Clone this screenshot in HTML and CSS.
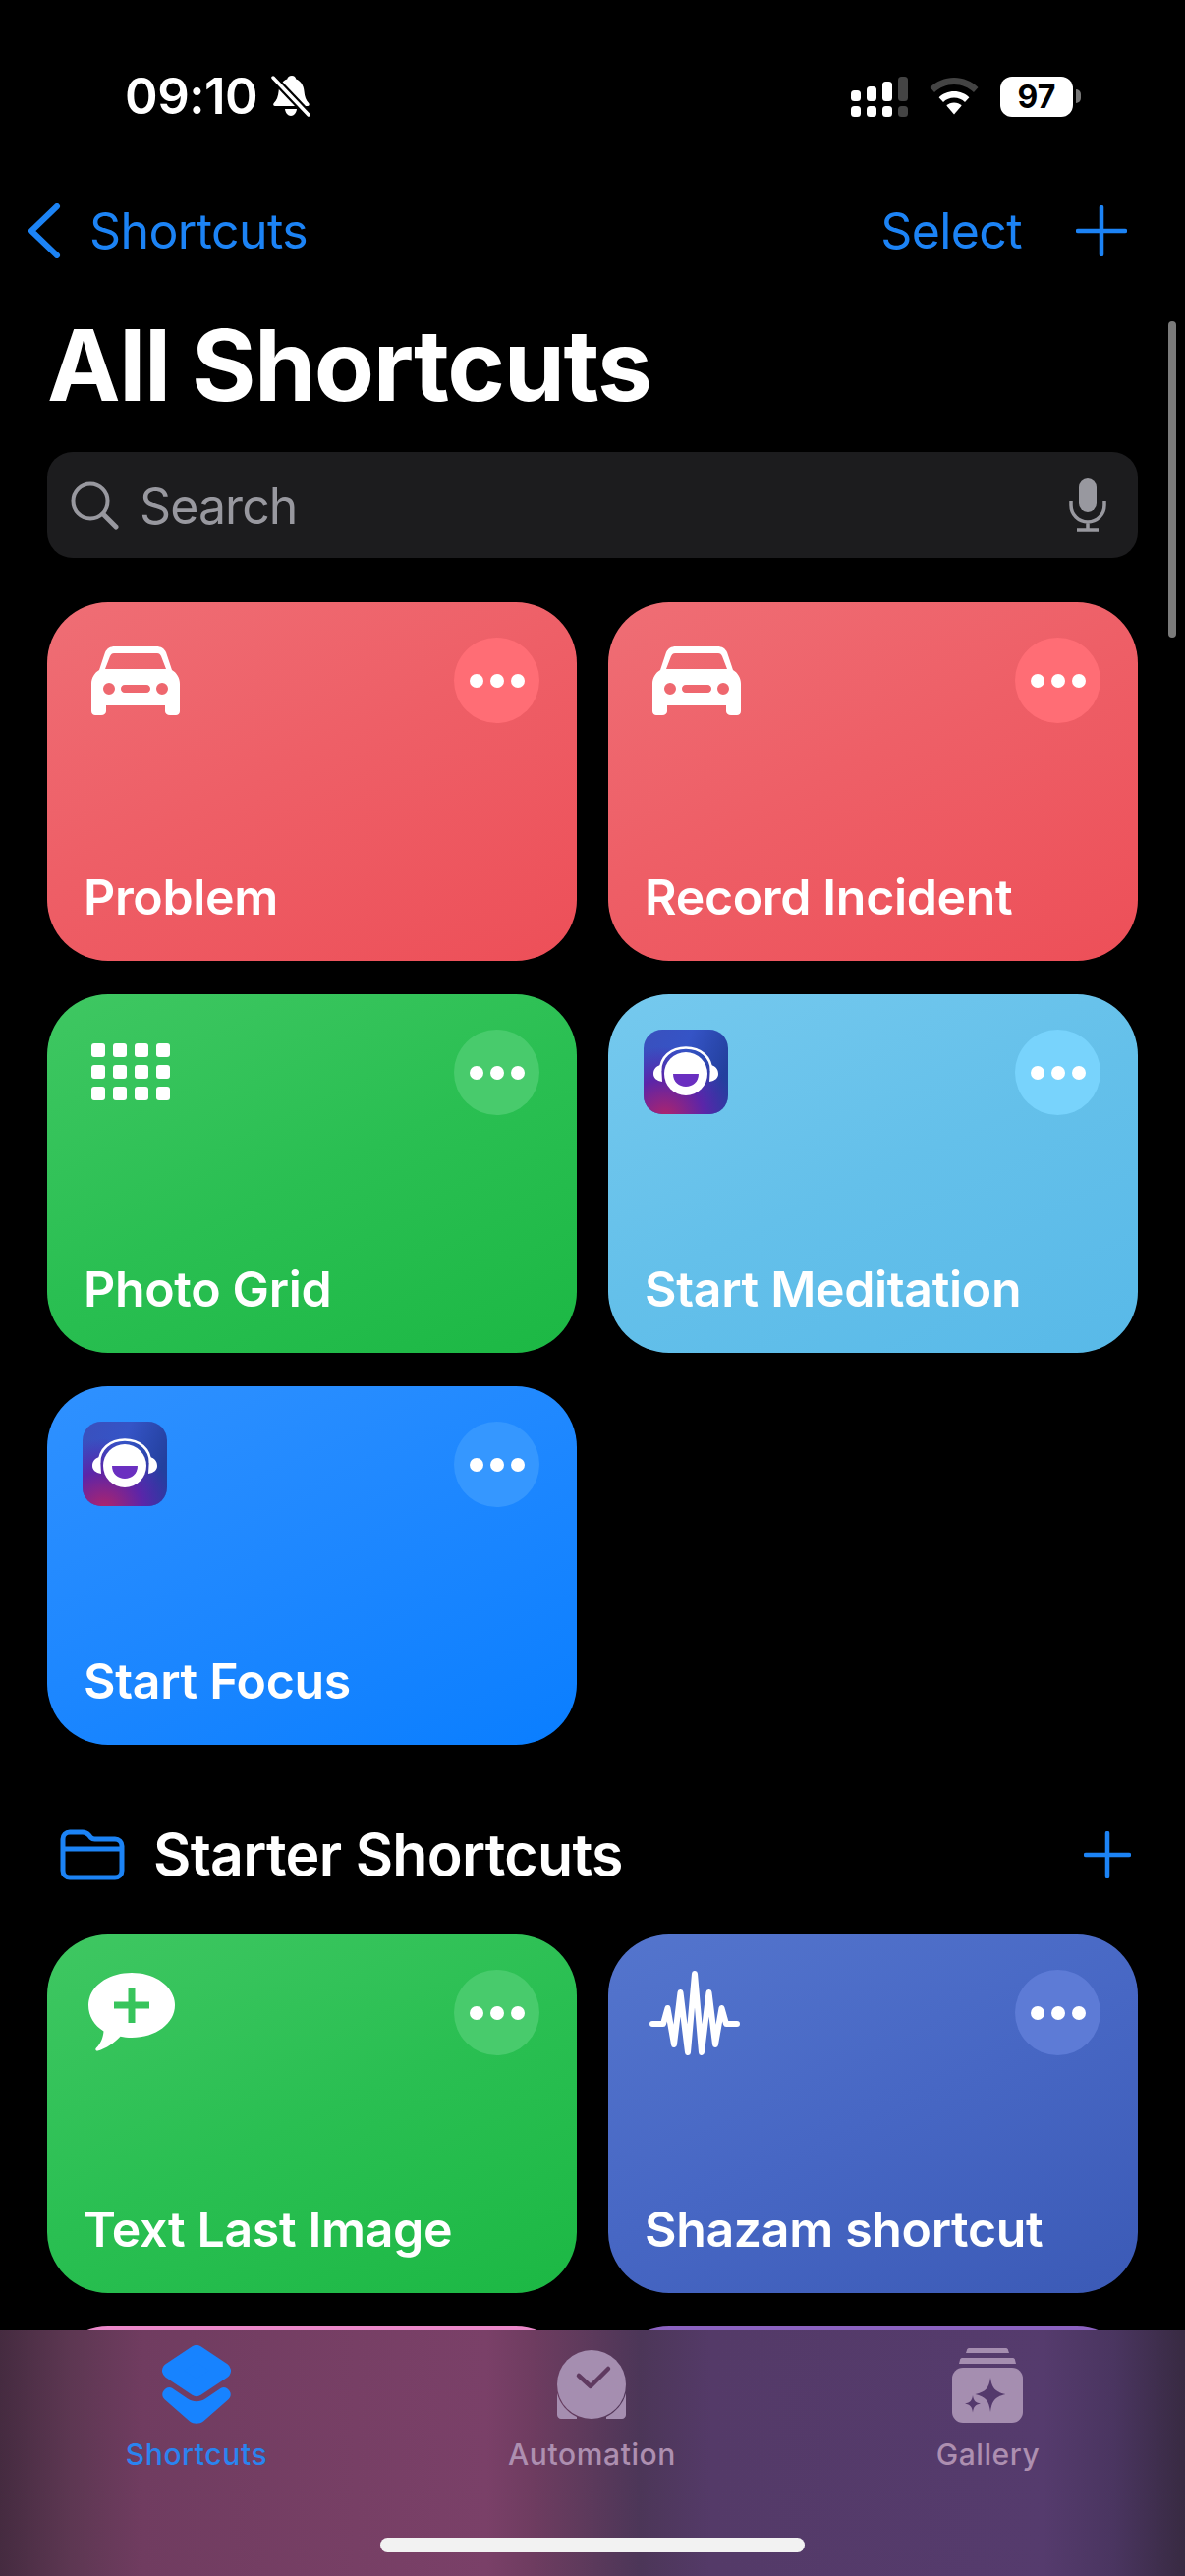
FILE: index.html
```html
<!DOCTYPE html>
<html lang="en">
<head>
<meta charset="utf-8">
<title>All Shortcuts</title>
<link rel="stylesheet" href="styles.css">
</head>
<body>
<div class="screen">
  <header class="status">
    <div class="status-left">
      <span class="time">09:10</span>
      <svg class="bell" viewBox="0 0 40 42"><path fill="#fff" d="M21 0c2.500 0 4 1.600 4.300 3.600 5 1.800 7.700 6.700 8.200 12.400.4 5 2 9.500 4.700 12 1 1.200.5 3-1.200 3H4c-1.800 0-2.400-1.800-1.300-3 2.800-2.600 4.500-7 4.900-12 .5-5.700 3.300-10.600 8.600-12.400C16.500 1.600 18.500 0 21 0z"/><path fill="#fff" d="M14 34h12c-.4 4-3 7-6 7s-5.600-3-6-7z"/><path stroke="#000" stroke-width="8" d="M0 0L40 42"/><path stroke="#fff" stroke-width="3.500" stroke-linecap="round" d="M2 2L38 40"/></svg>
    </div>
    <div class="status-right">
      <svg class="signal" viewBox="0 0 58 41"><g fill="#fff"><rect x="0" y="14" width="10" height="11" rx="3.500"/><rect x="16" y="10" width="10" height="15" rx="3.500"/><rect x="32" y="5" width="10" height="20" rx="3.500"/><rect x="0" y="30" width="10" height="11" rx="3.500"/><rect x="16" y="30" width="10" height="11" rx="3.500"/><rect x="32" y="30" width="10" height="11" rx="3.500"/></g><g fill="#444"><rect x="48" y="0" width="10" height="25" rx="3.500"/><rect x="48" y="30" width="10" height="11" rx="3.500"/></g></svg>
      <svg class="wifi" viewBox="0 0 50 38"><path fill="#444" d="M25 0c9.500 0 18 3.800 24.500 10L45 15C39.800 10 32.800 7 25 7S10.200 10 5 15L.5 10C7 3.800 15.500 0 25 0z"/><path fill="#fff" d="M25 14c6 0 11.400 2.300 15.400 6.200L36 25c-2.800-2.800-6.700-4.500-11-4.500S16.800 22.200 14 25l-4.400-4.800C13.600 16.300 19 14 25 14z"/><path fill="#fff" d="M25 25.500c3 0 5.700 1.200 7.700 3.100L25 37.500l-7.700-8.900c2-1.900 4.700-3.100 7.700-3.100z"/></svg>
      <div class="battery"><span class="battery-body">97</span><span class="battery-tip"></span></div>
    </div>
  </header>

  <nav class="navbar">
    <div class="nav-back">
      <svg class="chevron" viewBox="0 0 34 56"><path fill="none" stroke="#1c83f5" stroke-width="6" stroke-linecap="round" stroke-linejoin="round" d="M30 3L4 28L30 53"/></svg>
      <span>Shortcuts</span>
    </div>
    <div class="nav-actions">
      <span>Select</span>
      <svg class="plus-lg" viewBox="0 0 52 52"><path stroke="#1c83f5" stroke-width="4.500" stroke-linecap="round" d="M26 2V50M2 26H50"/></svg>
    </div>
  </nav>

  <main class="content">
    <h1 class="title">All Shortcuts</h1>
    <div class="search">
      <svg class="search-icon" viewBox="0 0 50 50"><circle cx="21" cy="21" r="17.500" fill="none" stroke="#98989f" stroke-width="4"/><path stroke="#98989f" stroke-width="5" stroke-linecap="round" d="M34 34L47 47"/></svg>
      <span class="search-text">Search</span>
      <svg class="mic-icon" viewBox="0 0 38 54"><rect x="10" y="0" width="18" height="34" rx="9" fill="#98989f"/><path fill="none" stroke="#98989f" stroke-width="3.500" d="M2 23v4c0 9.500 7.500 17 17 17s17-7.500 17-17v-4M19 44v8M8 52h22"/></svg>
    </div>

    <section class="grid">
      <article class="card red">
        <div class="card-top">
          <svg class="icon-car" viewBox="0 0 90 70"><path fill="#fff" fill-rule="evenodd" d="M24 0H66C71 0 74 2 76 6L82 24C87 27 90 32 90 38V66C90 68.500 88 70 86 70H80C77 70 75 68 75 66V60H15V66C15 68 13 70 10 70H4C2 70 0 68.500 0 66V38C0 32 3 27 8 24L14 6C16 2 19 0 24 0ZM23 7C21 7 20 8 19 10L14 23H76L71 10C70 8 69 7 67 7ZM18 37A6 6 0 1 0 18 49A6 6 0 1 0 18 37ZM72 37A6 6 0 1 0 72 49A6 6 0 1 0 72 37ZM34 39C31.500 39 30 41 30 43S31.500 47 34 47H56C58.500 47 60 45 60 43S58.500 39 56 39Z"/></svg>
          <button class="more"><i></i><i></i><i></i></button>
        </div>
        <h2 class="card-label">Problem</h2>
      </article>
      <article class="card red">
        <div class="card-top">
          <svg class="icon-car" viewBox="0 0 90 70"><path fill="#fff" fill-rule="evenodd" d="M24 0H66C71 0 74 2 76 6L82 24C87 27 90 32 90 38V66C90 68.500 88 70 86 70H80C77 70 75 68 75 66V60H15V66C15 68 13 70 10 70H4C2 70 0 68.500 0 66V38C0 32 3 27 8 24L14 6C16 2 19 0 24 0ZM23 7C21 7 20 8 19 10L14 23H76L71 10C70 8 69 7 67 7ZM18 37A6 6 0 1 0 18 49A6 6 0 1 0 18 37ZM72 37A6 6 0 1 0 72 49A6 6 0 1 0 72 37ZM34 39C31.500 39 30 41 30 43S31.500 47 34 47H56C58.500 47 60 45 60 43S58.500 39 56 39Z"/></svg>
          <button class="more"><i></i><i></i><i></i></button>
        </div>
        <h2 class="card-label">Record Incident</h2>
      </article>
      <article class="card green">
        <div class="card-top">
          <svg class="icon-grid" viewBox="0 0 80 58"><g fill="#fff"><rect x="0" y="0" width="14" height="14" rx="3"/><rect x="22" y="0" width="14" height="14" rx="3"/><rect x="44" y="0" width="14" height="14" rx="3"/><rect x="66" y="0" width="14" height="14" rx="3"/><rect x="0" y="22" width="14" height="14" rx="3"/><rect x="22" y="22" width="14" height="14" rx="3"/><rect x="44" y="22" width="14" height="14" rx="3"/><rect x="66" y="22" width="14" height="14" rx="3"/><rect x="0" y="44" width="14" height="14" rx="3"/><rect x="22" y="44" width="14" height="14" rx="3"/><rect x="44" y="44" width="14" height="14" rx="3"/><rect x="66" y="44" width="14" height="14" rx="3"/></g></svg>
          <button class="more"><i></i><i></i><i></i></button>
        </div>
        <h2 class="card-label">Photo Grid</h2>
      </article>
      <article class="card sky">
        <div class="card-top">
          <svg class="icon-app" viewBox="0 0 86 86"><use href="#app-logo"/></svg>
          <button class="more"><i></i><i></i><i></i></button>
        </div>
        <h2 class="card-label">Start Meditation</h2>
      </article>
      <article class="card blue">
        <div class="card-top">
          <svg class="icon-app" viewBox="0 0 86 86"><use href="#app-logo"/></svg>
          <button class="more"><i></i><i></i><i></i></button>
        </div>
        <h2 class="card-label">Start Focus</h2>
      </article>
    </section>

    <div class="section-head">
      <svg class="folder" viewBox="0 0 66 52"><path fill="none" stroke="#1c83f5" stroke-width="5" stroke-linejoin="round" d="M3 10c0-4 3-7 7-7h13c3 0 4.500 1 6.500 3l2 2.500c1 1 2 1.500 4 1.500H56c4 0 7 3 7 7v25c0 4-3 7-7 7H10c-4 0-7-3-7-7zM3 20h60"/></svg>
      <h2 class="section-title">Starter Shortcuts</h2>
      <svg class="plus-sm" viewBox="0 0 48 48"><path stroke="#1c83f5" stroke-width="4.500" stroke-linecap="round" d="M24 2V46M2 24H46"/></svg>
    </div>

    <section class="grid">
      <article class="card green">
        <div class="card-top">
          <svg class="icon-chat" viewBox="0 0 88 80"><path fill="#fff" fill-rule="evenodd" d="M44 0C68.500 0 88 14.500 88 33S68.500 66 44 66C40 66 36 65.600 32.500 64.800 27 70.500 18 77.500 9.500 79.500 7.500 80 6.500 78 8 76.500 12 72.500 15 66.500 15.500 59.500 6 53.500 0 44 0 33 0 14.500 19.500 0 44 0ZM40.500 15V29.500H26V36.500H40.500V51H47.500V36.500H62V29.500H47.500V15Z"/></svg>
          <button class="more"><i></i><i></i><i></i></button>
        </div>
        <h2 class="card-label">Text Last Image</h2>
      </article>
      <article class="card indigo">
        <div class="card-top">
          <svg class="icon-wave" viewBox="0 0 92 86"><path fill="none" stroke="#fff" stroke-width="6" stroke-linecap="round" stroke-linejoin="round" d="M3 54H14L18.500 38L25 75L31.500 22L39 83L46 3L53 83L60.500 22L67 75L73.500 38L78 54H89"/></svg>
          <button class="more"><i></i><i></i><i></i></button>
        </div>
        <h2 class="card-label">Shazam shortcut</h2>
      </article>
      <article class="card pink"></article>
      <article class="card purple"></article>
    </section>
  </main>

  <div class="scrollbar"></div>

  <footer class="tabbar">
    <div class="tab tab-active">
      <svg class="tab-icon" viewBox="0 0 70 80"><path fill="#1783ff" stroke="#1783ff" stroke-width="16" stroke-linejoin="round" d="M35 8L62 26L35 44L8 26Z"/><path fill="#1783ff" d="M4 44c2-1.500 4.500-1.500 6.500 0L26 54.500c5.500 3.500 12.500 3.500 18 0L59.500 44c2-1.500 4.500-1.500 6.500 0 5 3.500 5 9 0 12.500L42 77.500c-4 3-10 3-14 0L4 56.500C-1 53 -1 47.500 4 44z"/></svg>
      <span class="tab-label">Shortcuts</span>
    </div>
    <div class="tab">
      <svg class="tab-icon" viewBox="0 0 70 70"><path class="tab-fill" d="M0 44C3 55 10 63 20 68L20 70H4C2 70 0 68 0 66zM70 44C67 55 60 63 50 68L50 70H66C68 70 70 68 70 66z"/><circle class="tab-fill" cx="35" cy="35" r="35"/><path fill="none" stroke="#5f3a60" stroke-width="4.500" stroke-linecap="round" stroke-linejoin="round" d="M22 27L34 38L52 20" transform="translate(0 -1)"/></svg>
      <span class="tab-label">Automation</span>
    </div>
    <div class="tab">
      <svg class="tab-icon gallery" viewBox="0 0 72 76"><path class="tab-fill" d="M15 2c0-1 1-2 2-2h38c1 0 2 1 2 2l1 3H14zM8 12c0-1 1-2 2-2h52c1 0 2 1 2 2l1 4H7z"/><rect class="tab-fill" x="0" y="20" width="72" height="56" rx="11"/><path fill="#54396c" d="M39 30c1.500 11 5 14.500 15.500 17C44 49.500 40.500 53 39 65c-1.500-12-5-15.500-15.500-18C34 44.500 37.500 41 39 30z"/><path fill="#54396c" d="M21 48c.8 5.500 2.500 7.500 8 8.500-5.500 1-7.200 3-8 9-.8-6-2.500-8-8-9 5.500-1 7.200-3 8-8.500z"/></svg>
      <span class="tab-label">Gallery</span>
    </div>
    <div class="home-indicator"></div>
  </footer>

  <svg class="defs" width="0" height="0">
    <defs>
      <linearGradient id="logo-b" x1="0" y1="0" x2="1" y2="0.4"><stop offset="0" stop-color="#3a50bd"/><stop offset="0.5" stop-color="#3554c6"/><stop offset="1" stop-color="#23409e"/></linearGradient>
      <radialGradient id="logo-a" cx="0.25" cy="1.05" r="0.85"><stop offset="0" stop-color="#b2246a"/><stop offset="0.55" stop-color="#5c25a8"/><stop offset="1" stop-color="#5225b0" stop-opacity="0"/></radialGradient>
      <symbol id="app-logo" viewBox="0 0 86 86">
        <rect width="86" height="86" rx="19" fill="url(#logo-b)"/>
        <rect width="86" height="86" rx="19" fill="url(#logo-a)"/>
        <path fill="none" stroke="#fff" stroke-width="2.500" d="M17 42C17 28 28 18.500 43 18.500S69 28 69 42"/>
        <path fill="#fff" d="M18 36C12 37 10 41 10 45S13 52 19 53zM68 36C74 37 76 41 76 45S73 52 67 53z"/>
        <circle cx="43" cy="45" r="22" fill="#fff"/>
        <path fill="#6a2fc0" d="M30 45H56C56 53 50 58 43 58S30 53 30 45z"/>
      </symbol>
    </defs>
  </svg>
</div>
</body>
</html>
```

FILE: styles.css
```css
* { box-sizing: border-box; }

html, body {
  margin: 0;
  padding: 0;
  background: #000;
}

.screen {
  position: relative;
  width: 1206px;
  height: 2622px;
  overflow: hidden;
  background: #000;
  color: #fff;
  font-family: Inter, "Noto Sans", "Liberation Sans", sans-serif;
}

/* status bar */
.status {
  display: flex;
  justify-content: space-between;
  align-items: center;
  height: 196px;
  padding: 0 106px 0 127px;
}

.status-left {
  display: flex;
  align-items: center;
  gap: 14px;
}

.time {
  font-size: 51px;
  font-weight: 600;
  line-height: 60px;
  letter-spacing: -0.5px;
}

.bell { width: 40px; height: 42px; }

.status-right {
  display: flex;
  align-items: center;
  gap: 22px;
}

.signal { width: 58px; height: 41px; }
.wifi { width: 50px; height: 38px; }

.battery {
  display: flex;
  align-items: center;
  gap: 3px;
}

.battery-body {
  display: flex;
  align-items: center;
  justify-content: center;
  width: 74px;
  height: 41px;
  border-radius: 12px;
  background: #fff;
  color: #000;
  font-size: 32px;
  font-weight: 700;
}

.battery-tip {
  width: 5px;
  height: 14px;
  border-radius: 0 5px 5px 0;
  background: #777;
}

/* navigation */
.navbar {
  display: flex;
  justify-content: space-between;
  align-items: center;
  height: 78px;
  padding: 0 59px 0 28px;
  color: #1c83f5;
  font-size: 50px;
  letter-spacing: -0.6px;
}

.nav-back {
  display: flex;
  align-items: center;
  gap: 29px;
}

.chevron { width: 34px; height: 56px; }

.nav-actions {
  display: flex;
  align-items: center;
  gap: 55px;
}

.plus-lg { width: 52px; height: 52px; }

/* content */
.content {
  padding: 0 48px;
}

.title {
  margin: 38px 0 0;
  font-size: 100px;
  font-weight: 700;
  line-height: 120px;
  letter-spacing: -1.4px;
}

.search {
  display: flex;
  align-items: center;
  height: 108px;
  margin-top: 28px;
  padding: 0 32px 0 23px;
  border-radius: 26px;
  background: #1c1c1e;
}

.search-icon { width: 50px; height: 50px; }

.search-text {
  flex: 1;
  margin-left: 21px;
  padding-top: 2px;
  color: #98989f;
  font-size: 50px;
  letter-spacing: -0.9px;
}

.mic-icon { width: 38px; height: 54px; }

.grid {
  display: grid;
  grid-template-columns: 539px 539px;
  grid-auto-rows: 365px;
  column-gap: 32px;
  row-gap: 34px;
  margin-top: 45px;
}

.card {
  position: relative;
  display: flex;
  flex-direction: column;
  justify-content: space-between;
  padding: 36px 38px 35px 37px;
  border-radius: 62px;
}

.red { background: linear-gradient(155deg, #ef6e75 0%, #ee5f67 45%, #ed4f58 100%); }
.red .more { background: #ff6d75; }
.green { background: linear-gradient(155deg, #3fc762 0%, #2abf52 50%, #1cb844 100%); }
.green .more { background: #48cb6c; }
.sky { background: linear-gradient(155deg, #75c9ee 0%, #64c0ea 50%, #58b9e8 100%); }
.sky .more { background: #78d3fc; }
.blue { background: linear-gradient(155deg, #2f91ff 0%, #1d87ff 50%, #0a7eff 100%); }
.blue .more { background: #3597ff; }
.indigo { background: linear-gradient(155deg, #5475cd 0%, #4767c4 50%, #3b5ab6 100%); }
.indigo .more { background: #5d7bd6; }
.pink { background: #ea88c9; }
.purple { background: #8b62c0; }

.card-top {
  display: flex;
  justify-content: space-between;
  align-items: flex-start;
  height: 87px;
}

.icon-car { width: 90px; height: 70px; margin: 9px 0 0 8px; }
.icon-grid { width: 80px; height: 58px; margin: 14px 0 0 8px; }
.icon-app { width: 86px; height: 86px; margin-left: -1px; }
.icon-chat { width: 88px; height: 80px; margin: 3px 0 0 5px; }
.icon-wave { width: 92px; height: 86px; margin: 1px 0 0 5px; }

.more {
  display: flex;
  align-items: center;
  justify-content: center;
  gap: 7px;
  width: 87px;
  height: 87px;
  padding: 0;
  border: 0;
  border-radius: 50%;
}

.more i {
  width: 14px;
  height: 14px;
  border-radius: 50%;
  background: #fff;
}

.card-label {
  margin: 0;
  font-size: 50px;
  font-weight: 600;
  line-height: 60px;
  letter-spacing: -0.33px;
}

.section-head {
  display: flex;
  align-items: center;
  height: 88px;
  margin-top: 68px;
  padding: 0 7px 0 13px;
}

.folder { width: 66px; height: 52px; }

.section-title {
  flex: 1;
  margin: 0 0 0 29px;
  font-size: 59px;
  font-weight: 600;
  line-height: 72px;
  letter-spacing: -0.7px;
}

.plus-sm { width: 48px; height: 48px; }

.section-head + .grid { margin-top: 37px; }

/* scroll indicator */
.scrollbar {
  position: absolute;
  top: 327px;
  right: 9px;
  width: 8px;
  height: 322px;
  border-radius: 4px;
  background: #7b7b7b;
}

/* tab bar */
.tabbar {
  position: absolute;
  left: 0;
  right: 0;
  bottom: 0;
  display: grid;
  grid-template-columns: 400px 403px 403px;
  height: 250px;
  padding-top: 15px;
  background: linear-gradient(90deg, #452b40 0%, #5d3752 6%, #703c60 12%, #773f65 30%, #7a4068 41%, #6e3c60 45%, #5f3a5c 49%, #4c3658 54%, #543a68 60%, #553b6d 88%, #4a3560 94%, #382a42 100%);
}

.tab {
  display: flex;
  flex-direction: column;
  align-items: center;
  color: #ad8fb0;
}

.tab-icon {
  width: 70px;
  height: 80px;
  margin-bottom: 13px;
}

.tab:nth-child(2) .tab-icon { height: 70px; margin: 5px 0 18px; }
.tab .gallery { width: 72px; height: 76px; margin: 3px 0 14px; }

.tab-fill { fill: #a58eb0; }

.tab-active { color: #2a84f0; }

.tab-label {
  font-size: 30px;
  font-weight: 500;
  line-height: 36px;
  letter-spacing: 0.6px;
}

.tab:nth-child(2) .tab-label,
.tab:nth-child(3) .tab-label { margin-left: 2px; }

.home-indicator {
  position: absolute;
  left: 387px;
  bottom: 24px;
  width: 432px;
  height: 15px;
  border-radius: 8px;
  background: #f2f2f2;
}

.defs { position: absolute; }
```
